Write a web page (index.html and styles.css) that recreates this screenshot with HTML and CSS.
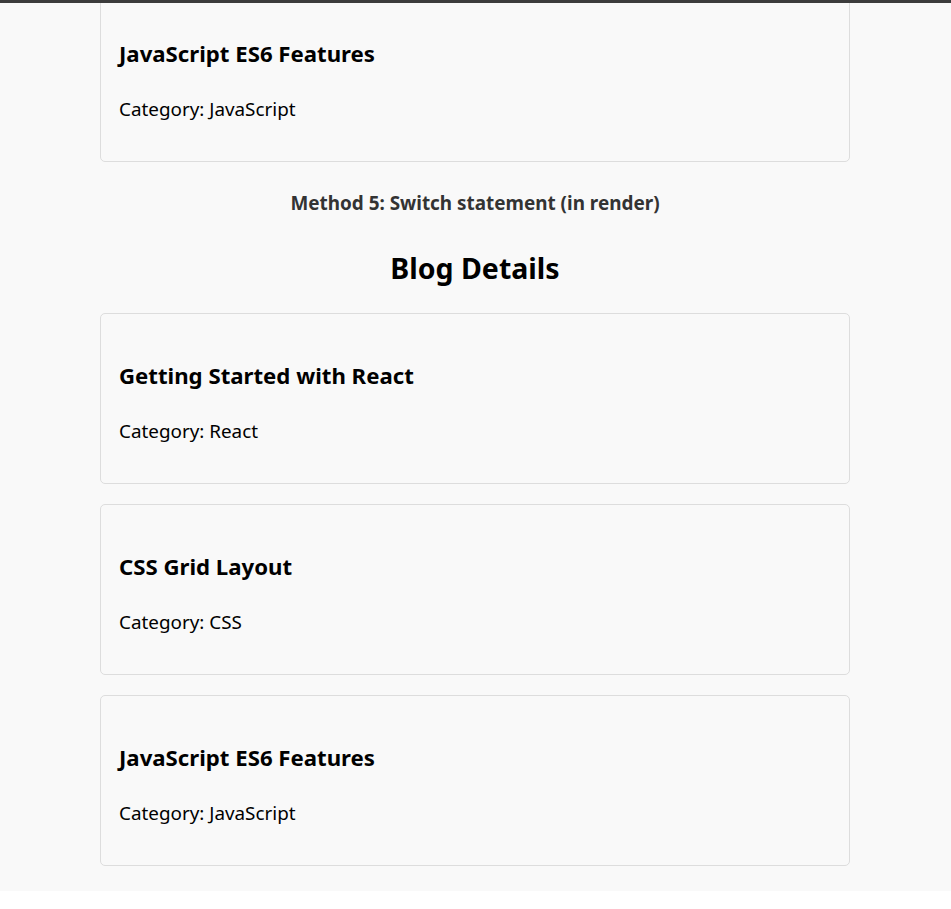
FILE: index.html
```html
<!DOCTYPE html>
<html lang="en">
<head>
<meta charset="utf-8">
<title>Blog Details</title>
<link rel="stylesheet" href="styles.css">
</head>
<body>
<div class="topbar"></div>
<main class="page">
  <section class="list list--clipped">
    <article class="card">
      <h3 class="card-title">JavaScript ES6 Features</h3>
      <p class="card-meta">Category: JavaScript</p>
    </article>
  </section>

  <h4 class="method">Method 5: Switch statement (in render)</h4>
  <h2 class="section-title">Blog Details</h2>

  <section class="list">
    <article class="card">
      <h3 class="card-title">Getting Started with React</h3>
      <p class="card-meta">Category: React</p>
    </article>
    <article class="card">
      <h3 class="card-title">CSS Grid Layout</h3>
      <p class="card-meta">Category: CSS</p>
    </article>
    <article class="card">
      <h3 class="card-title">JavaScript ES6 Features</h3>
      <p class="card-meta">Category: JavaScript</p>
    </article>
  </section>
</main>
</body>
</html>
```
FILE: styles.css
```css
html, body {
  margin: 0;
  padding: 0;
  background: #ffffff;
}

body {
  font-family: "Noto Sans", "Open Sans", "Liberation Sans", sans-serif;
  font-size: 18px;
  color: #000;
}

.topbar {
  height: 3px;
  background: #3c3c3c;
}

.page {
  background: #f9f9f9;
  overflow: hidden;
  padding: 0 1px 25px 0;
}

.list {
  width: 750px;
  margin: 0 auto;
  display: flex;
  flex-direction: column;
  gap: 20px;
}

.list--clipped {
  margin-top: -12px;
}

.card {
  border: 1px solid #dddddd;
  border-radius: 5px;
  padding: 25px 18px 20px;
  background: #f9f9f9;
}

.card-title {
  font-size: 22.2px;
  font-weight: 700;
  line-height: 28px;
  margin: 23px 0 0;
}

.card-meta {
  font-size: 18.85px;
  line-height: 24px;
  margin: 29px 0 20px;
}

.method {
  text-align: center;
  font-size: 18.9px;
  font-weight: 700;
  color: #333;
  line-height: 24px;
  margin: 29px 0 0;
}

.section-title {
  text-align: center;
  font-size: 28.5px;
  font-weight: 700;
  line-height: 36px;
  margin: 35px 0 27px;
}
```
